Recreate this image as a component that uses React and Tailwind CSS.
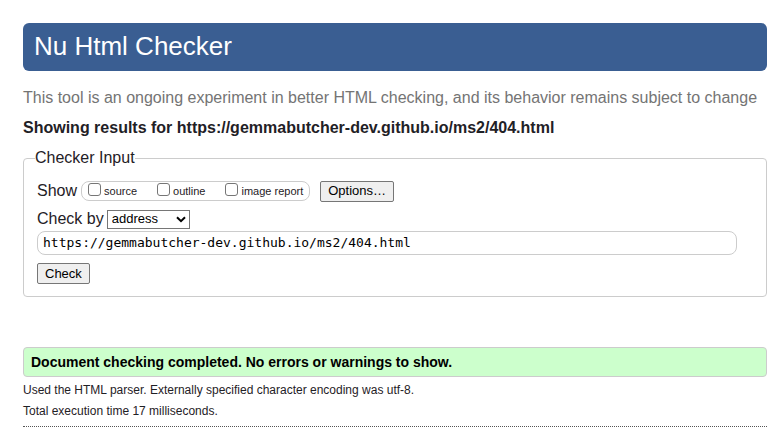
const outputs = ["source", "outline", "image report"];

function ShowOptions() {
  return (
    <div className="flex items-center">
      <span className="mr-1">Show</span>
      <div className="flex h-5 items-center gap-5 rounded-lg border border-[#ccc] px-1.5 text-[11px]">
        {outputs.map((name) => (
          <label key={name} className="flex items-center gap-[3px]">
            <input
              type="checkbox"
              className="mb-1 size-[13px] appearance-none rounded-[3px] border border-[#767676] bg-white checked:bg-[#0075ff]"
            />
            {name}
          </label>
        ))}
      </div>
      <button
        type="button"
        className="ml-2.5 h-[21px] rounded-xs border border-[#767676] bg-[#efefef] px-[7px] text-[13px] leading-4 text-black"
      >
        Options…
      </button>
    </div>
  );
}

function CheckerForm() {
  return (
    <form onSubmit={(event) => event.preventDefault()}>
      <fieldset className="rounded border border-[#ccc] px-[13px] pb-3">
        <legend className="-ml-0.5 leading-6">Checker Input</legend>
        <div className="pt-[9px]">
          <ShowOptions />
          <div className="mt-1.5 flex items-center">
            <label htmlFor="method" className="mr-[3px] leading-5">
              Check by
            </label>
            <div className="relative">
              <select
                id="method"
                defaultValue="address"
                className="block h-[19px] w-[83px] appearance-none border border-[#767676] bg-white pl-1 text-[13px] leading-4 text-black"
              >
                <option>address</option>
                <option>file upload</option>
                <option>text input</option>
              </select>
              <svg
                viewBox="0 0 10 7"
                className="pointer-events-none absolute top-1.5 right-1 h-[7px] w-2.5"
                fill="none"
                stroke="black"
                strokeWidth="2"
              >
                <path d="M1 1.2 5 5.2 9 1.2" />
              </svg>
            </div>
          </div>
          <div className="mt-0.5 pr-4">
            <input
              type="url"
              aria-label="Address of page to check"
              defaultValue="https://gemmabutcher-dev.github.io/ms2/404.html"
              className="block h-6 w-full rounded-lg border border-[#ccc] bg-white px-[5px] pb-0.5 font-['DejaVu_Sans_Mono',monospace] text-[13px] text-black"
            />
          </div>
          <button
            type="submit"
            className="mt-2 block h-[21px] rounded-xs border border-[#767676] bg-[#efefef] px-[7px] text-[13px] leading-4 text-black"
          >
            Check
          </button>
        </div>
      </fieldset>
    </form>
  );
}

export default function App() {
  return (
    <div className="bg-white pt-[23px] pr-2 pl-[23px] font-['Liberation_Sans',Arial,sans-serif] text-base text-[#1f2126]">
      <header>
        <h1 className="rounded-md bg-[#3a5e92] px-[11px] pb-0.5 text-[26px] leading-[46px] text-white">
          Nu Html Checker
        </h1>
        <p className="mt-[15px] leading-6 text-[#747474]">
          This tool is an ongoing experiment in better HTML checking, and its behavior remains
          subject to change
        </p>
      </header>
      <main>
        <h2 className="mt-1.5 mb-1.5 leading-6 font-bold">
          Showing results for https://gemmabutcher-dev.github.io/ms2/404.html
        </h2>
        <CheckerForm />
        <section className="mt-[50px] border-b border-dotted border-[#555] pb-[7px]">
          <p className="rounded border border-[#ccc] bg-[#ccffcc] px-[7px] text-sm leading-7 font-bold text-black">
            Document checking completed. No errors or warnings to show.
          </p>
          <p className="mt-[5px] text-xs leading-4">
            Used the HTML parser. Externally specified character encoding was utf-8.
          </p>
          <p className="mt-[5px] text-xs leading-4">Total execution time 17 milliseconds.</p>
        </section>
      </main>
    </div>
  );
}
